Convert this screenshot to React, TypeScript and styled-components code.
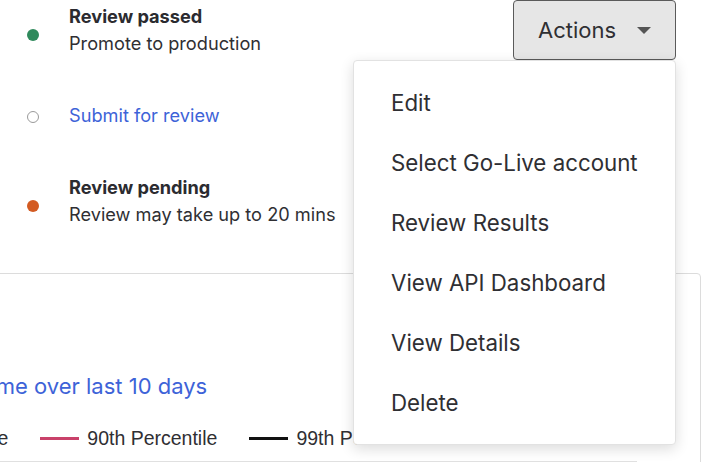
import React from "react";
import styled, { createGlobalStyle } from "styled-components";

const GlobalStyle = createGlobalStyle`
  html, body { margin: 0; padding: 0; background: #ffffff; }
  body { font-family: Inter, "Noto Sans", sans-serif; color: #2f2f33; }
`;

const Page = styled.div`
  position: relative;
  width: 718px;
  height: 462px;
  overflow: hidden;
  background: #fff;
`;

const TopRow = styled.div`
  display: flex;
  justify-content: space-between;
  align-items: flex-start;
`;

const Steps = styled.div`
  display: flex;
  flex-direction: column;
  gap: 45px;
  padding: 3px 0 0 27px;
`;

const Step = styled.div`
  display: flex;
  align-items: center;
  gap: 30px;
`;

const Dot = styled.span<{ $color?: string; $hollow?: boolean; $shift: number }>`
  flex: none;
  width: 12px;
  height: 12px;
  border-radius: 50%;
  box-sizing: border-box;
  background: ${(p) => (p.$hollow ? "#fff" : p.$color)};
  border: ${(p) => (p.$hollow ? "1px solid #9a9a9a" : "none")};
  transform: translateY(${(p) => p.$shift}px);
`;

const StepText = styled.div`
  display: flex;
  flex-direction: column;
  font-size: 18.2px;
  line-height: 27px;
`;

const StepTitle = styled.span`
  font-weight: 700;
  color: #2b2b30;
`;

const StepSub = styled.span`
  color: #2f2f33;
`;

const StepLink = styled.a`
  color: #3d63d8;
  text-decoration: none;
`;

const ActionsWrap = styled.div`
  position: relative;
  margin-right: 42px;
`;

const ActionsButton = styled.button`
  display: flex;
  align-items: center;
  gap: 21px;
  box-sizing: border-box;
  width: 163px;
  height: 60px;
  padding: 0 24px;
  background: #e6e6e6;
  border: 1px solid #5a5a5a;
  border-radius: 4px;
  font-family: inherit;
  font-size: 22px;
  color: #2f2f33;
  cursor: pointer;
`;

const Caret = styled.span`
  width: 0;
  height: 0;
  border-left: 7px solid transparent;
  border-right: 7px solid transparent;
  border-top: 7px solid #555;
`;

const Menu = styled.ul`
  position: absolute;
  top: 60px;
  right: 0;
  z-index: 10;
  width: 323px;
  box-sizing: border-box;
  margin: 0;
  padding: 11px 0 12px;
  list-style: none;
  background: #fff;
  border: 1px solid #e2e2e2;
  border-radius: 4px;
  box-shadow: 0 4px 14px rgba(0, 0, 0, 0.14);
`;

const MenuItem = styled.li`
  height: 60px;
  display: flex;
  align-items: center;
  padding-left: 37px;
  font-size: 22.3px;
  color: #2f2f33;
`;

const Card = styled.section`
  margin: 45px 17px 0 -212px;
  border: 1px solid #dcdcdc;
  border-radius: 4px;
  background: #fff;
  padding-top: 97px;
`;

const CardTitle = styled.h2`
  margin: 0;
  font-size: 22px;
  font-weight: 400;
  line-height: 30px;
  color: #3d63d8;
  white-space: nowrap;
`;

const Legend = styled.div`
  display: flex;
  align-items: center;
  gap: 32px;
  margin-top: 25px;
  padding-left: 100px;
  font-family: "Liberation Sans", Arial, sans-serif;
  font-size: 19.5px;
  line-height: 24px;
  color: #2f2f33;
`;

const LegendItem = styled.span`
  display: flex;
  align-items: center;
  gap: 8px;
  white-space: nowrap;
`;

const Swatch = styled.span<{ $color: string }>`
  width: 39px;
  height: 3px;
  background: ${(p) => p.$color};
`;

const Chart = styled.div`
  margin: 11px 63px 0 0;
  height: 40px;
  border-top: 2px solid #e0e0e0;
`;

const menuItems = [
  "Edit",
  "Select Go-Live account",
  "Review Results",
  "View API Dashboard",
  "View Details",
  "Delete",
];

export default function App() {
  return (
    <Page>
      <GlobalStyle />
      <TopRow>
        <Steps>
          <Step>
            <Dot $color="#2f8a5c" $shift={5} />
            <StepText>
              <StepTitle>Review passed</StepTitle>
              <StepSub>Promote to production</StepSub>
            </StepText>
          </Step>
          <Step>
            <Dot $hollow $shift={1} />
            <StepText>
              <StepLink href="#">Submit for review</StepLink>
            </StepText>
          </Step>
          <Step>
            <Dot $color="#d35b22" $shift={5} />
            <StepText>
              <StepTitle>Review pending</StepTitle>
              <StepSub>Review may take up to 20 mins</StepSub>
            </StepText>
          </Step>
        </Steps>
        <ActionsWrap>
          <ActionsButton>
            Actions
            <Caret />
          </ActionsButton>
          <Menu>
            {menuItems.map((m) => (
              <MenuItem key={m}>{m}</MenuItem>
            ))}
          </Menu>
        </ActionsWrap>
      </TopRow>
      <Card>
        <CardTitle>Average response time over last 10 days</CardTitle>
        <Legend>
          <LegendItem>
            <Swatch $color="#4a7fd6" />
            Average
          </LegendItem>
          <LegendItem>
            <Swatch $color="#c9416a" />
            90th Percentile
          </LegendItem>
          <LegendItem>
            <Swatch $color="#111" />
            99th Percentile
          </LegendItem>
        </Legend>
        <Chart />
      </Card>
    </Page>
  );
}
